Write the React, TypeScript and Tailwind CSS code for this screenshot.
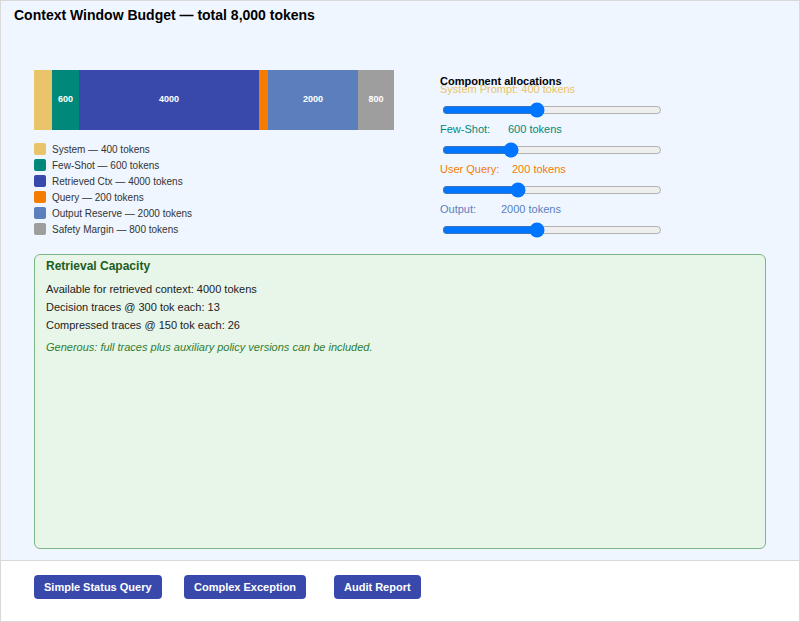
import React from "react";

const segs = [
  { name: "System", v: 400, c: "#e9c46a" },
  { name: "Few-Shot", v: 600, c: "#00897b" },
  { name: "Retrieved Ctx", v: 4000, c: "#3949ab" },
  { name: "Query", v: 200, c: "#f57c00" },
  { name: "Output Reserve", v: 2000, c: "#5b7fbd" },
  { name: "Safety Margin", v: 800, c: "#9e9e9e" },
];

function Slider({ min, max, value }: { min: number; max: number; value: number }) {
  return (
    <input
      type="range"
      min={min}
      max={max}
      defaultValue={value}
      className="block w-[220px] h-[16px] ml-[2px] mt-[6px]"
    />
  );
}

export default function App() {
  return (
    <div
      className="w-[800px] h-[622px] border border-[#d9d9d9] flex flex-col box-border"
      style={{ fontFamily: '"Liberation Sans", Arial, sans-serif' }}
    >
      <div className="flex-1 bg-[#eff6ff] flex flex-col">
        <div className="px-[13px] pt-[6px] text-[14px] leading-[16px] font-bold text-black">
          Context Window Budget — total 8,000 tokens
        </div>
        <div className="flex items-start px-[33px] mt-[47px]">
          <div className="w-[360px]">
            <div className="flex h-[60px] w-[360px]">
              {segs.map((s) => {
                const w = (s.v / 8000) * 360;
                return (
                  <div
                    key={s.name}
                    className="h-full flex items-center justify-center text-white font-bold text-[9px]"
                    style={{ width: w, backgroundColor: s.c }}
                  >
                    {w > 20 ? s.v : ""}
                  </div>
                );
              })}
            </div>
            <div className="mt-[11px] flex flex-col">
              {segs.map((s) => (
                <div key={s.name} className="h-[16px] flex items-center gap-[6px]">
                  <div className="w-[12px] h-[12px] rounded-[2px]" style={{ backgroundColor: s.c }} />
                  <span className="text-[10px] text-[#333]">
                    {s.name} — {s.v} tokens
                  </span>
                </div>
              ))}
            </div>
          </div>
          <div className="ml-[46px] mt-[4px] w-[240px]">
            <div className="h-[14px] leading-[14px] text-[11px] font-bold text-black">Component allocations</div>
            <div className="mt-[-6px] h-[14px] leading-[14px] text-[11px] text-[#e9c46a]">System Prompt: 400 tokens</div>
            <Slider min={100} max={800} value={400} />
            <div className="mt-[4px] h-[14px] leading-[14px] text-[11px] text-[#00897b] flex">
              <span className="w-[68px]">Few-Shot:</span>
              <span>600 tokens</span>
            </div>
            <Slider min={0} max={2000} value={600} />
            <div className="mt-[4px] h-[14px] leading-[14px] text-[11px] text-[#f57c00] flex">
              <span className="w-[72px]">User Query:</span>
              <span>200 tokens</span>
            </div>
            <Slider min={50} max={500} value={200} />
            <div className="mt-[4px] h-[14px] leading-[14px] text-[11px] text-[#5b7fbd] flex">
              <span className="w-[61px]">Output:</span>
              <span>2000 tokens</span>
            </div>
            <Slider min={500} max={4000} value={2000} />
          </div>
        </div>
        <div className="mx-[33px] mt-[16px] mb-[11px] flex-1 bg-[#e8f5e9] border border-[#7cb883] rounded-[6px] px-[11px] pt-[4px]">
          <div className="text-[12px] leading-[15px] font-bold text-[#1b5e20]">Retrieval Capacity</div>
          <div className="mt-[6px] text-[11px] leading-[18px] text-[#222]">
            <div>Available for retrieved context: 4000 tokens</div>
            <div>Decision traces @ 300 tok each: 13</div>
            <div>Compressed traces @ 150 tok each: 26</div>
          </div>
          <div className="mt-[4px] text-[11px] leading-[18px] italic text-[#2e7d32]">
            Generous: full traces plus auxiliary policy versions can be included.
          </div>
        </div>
      </div>
      <div className="h-[61px] border-t border-[#d9d9d9] bg-white px-[33px] pt-[13px] grid grid-cols-[150px_150px_150px] items-start">
        {["Simple Status Query", "Complex Exception", "Audit Report"].map((t) => (
          <div key={t}>
            <button className="h-[24px] px-[10px] bg-[#3949ab] text-white font-bold text-[11px] rounded-[4px]">
              {t}
            </button>
          </div>
        ))}
      </div>
    </div>
  );
}
